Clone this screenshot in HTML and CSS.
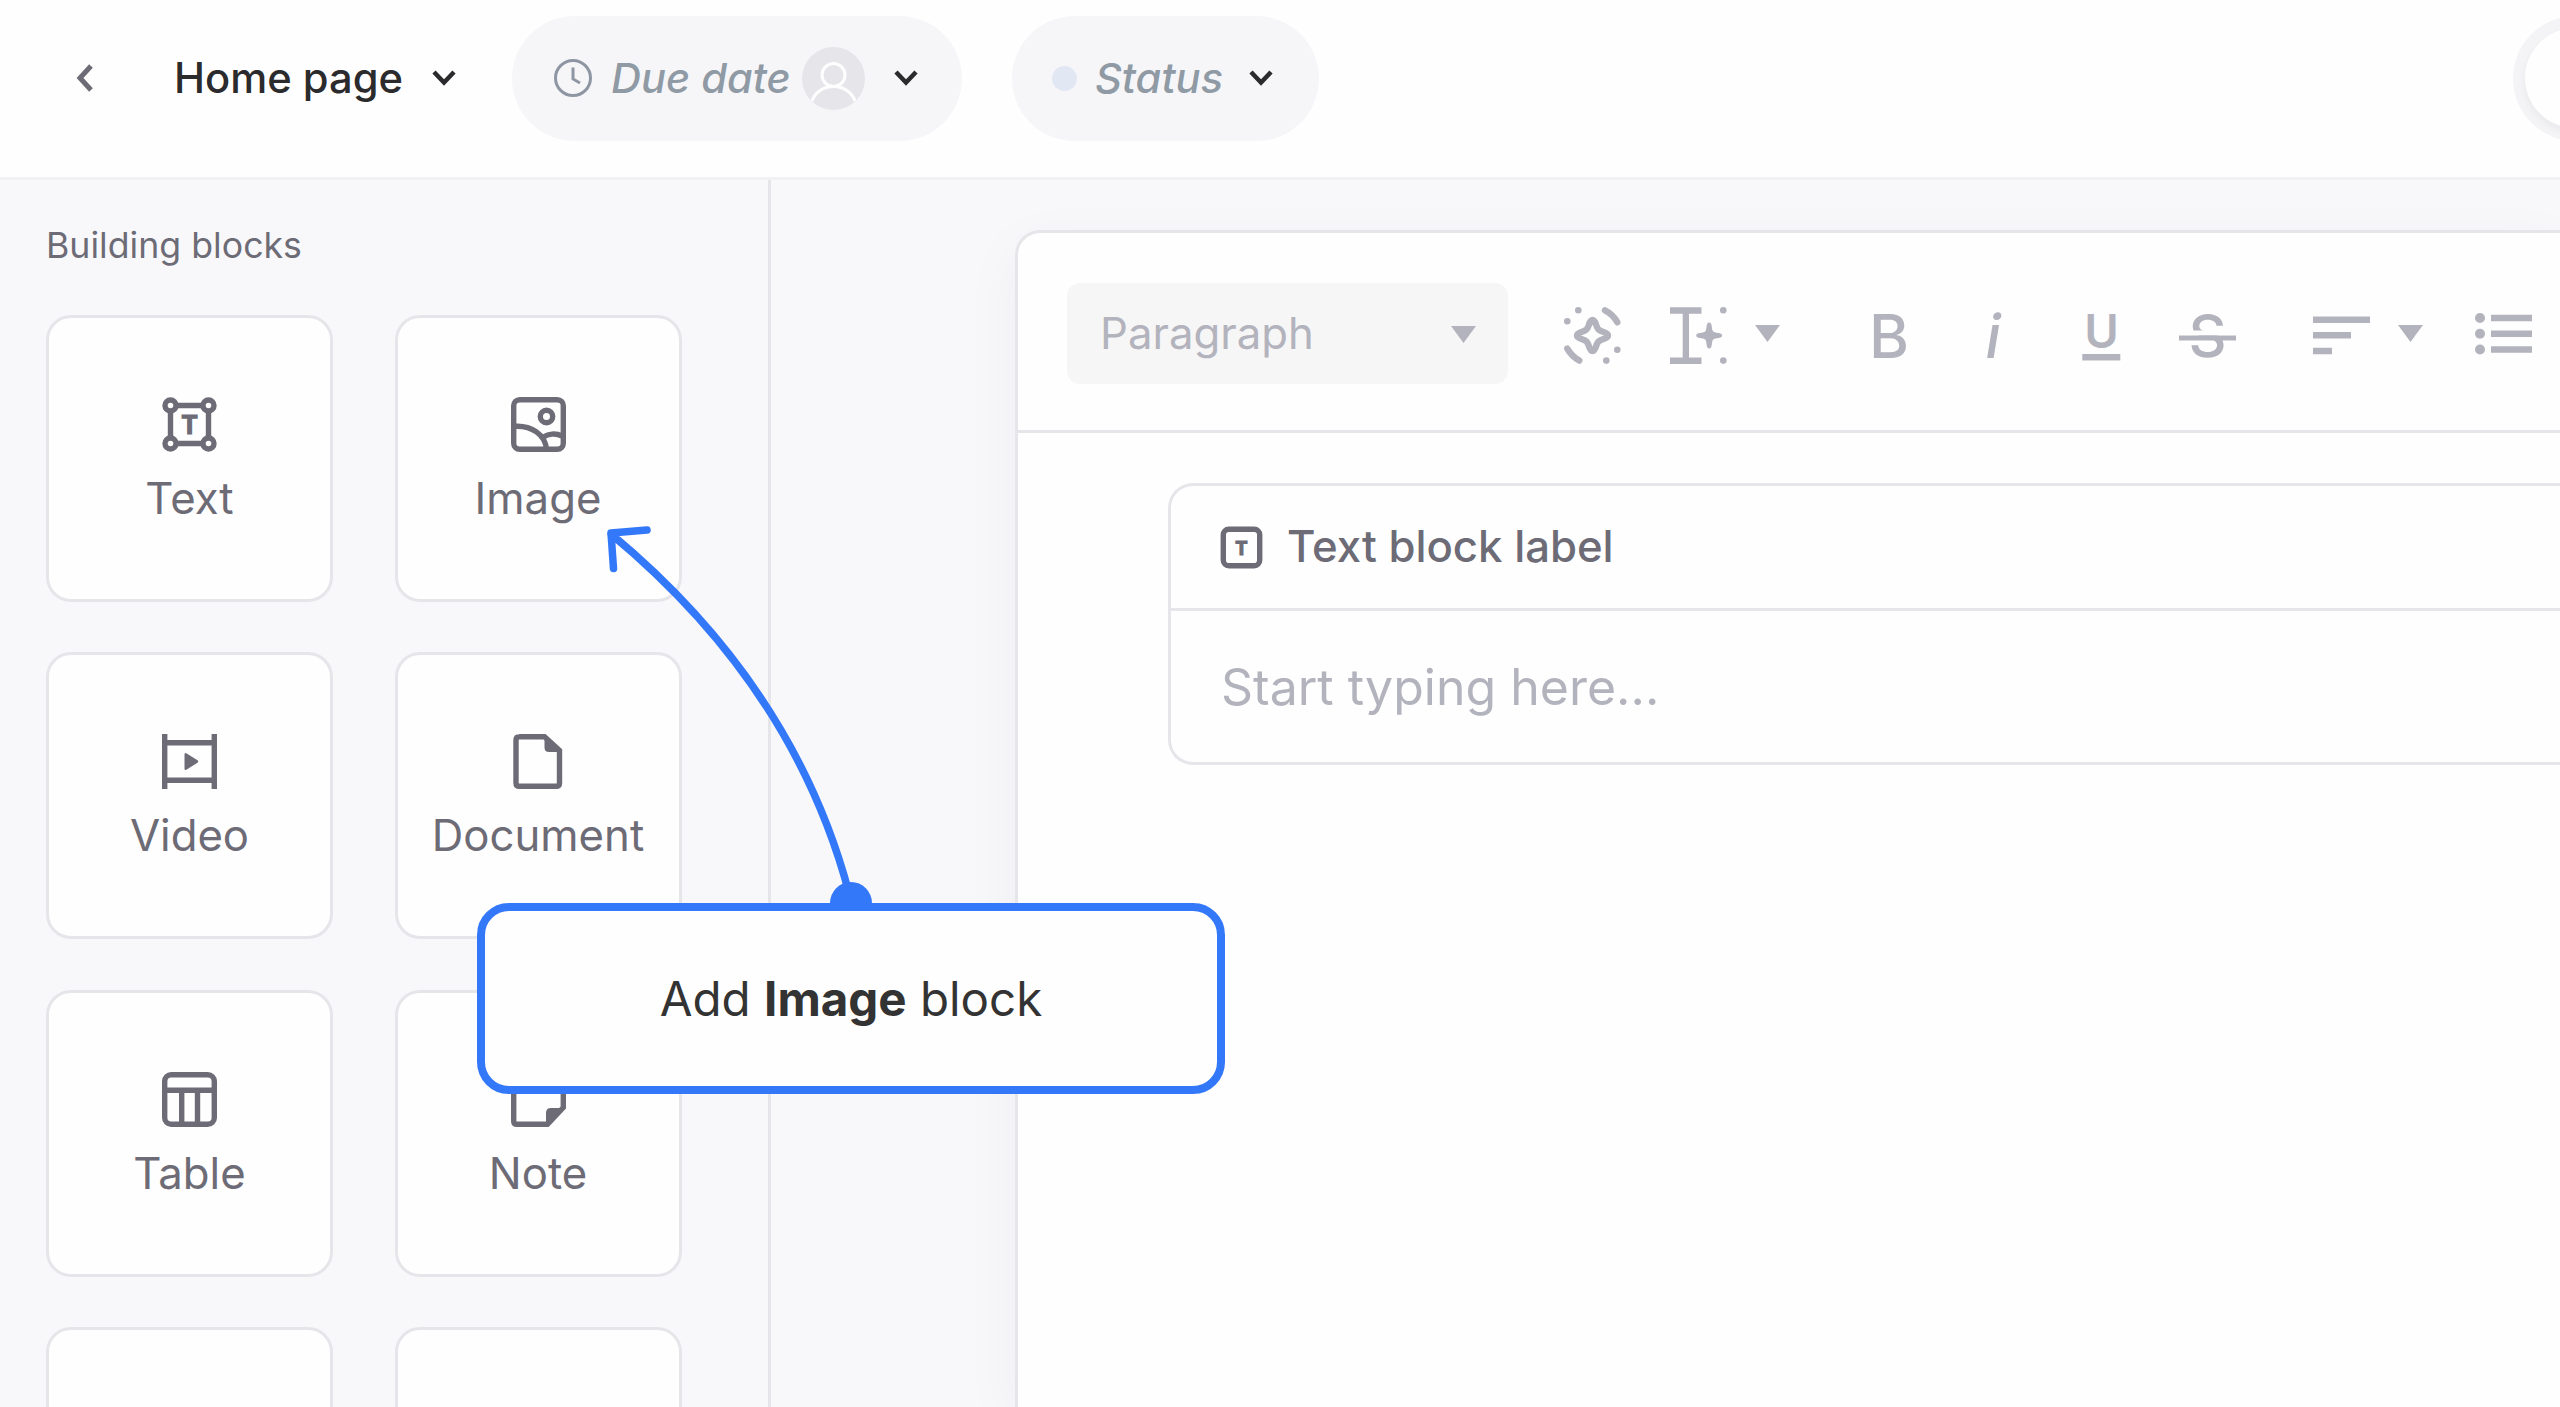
FILE: index.html
```html
<!DOCTYPE html>
<html lang="en">
<head>
    <meta charset="UTF-8">
    <meta name="viewport" content="width=device-width, initial-scale=1.0">
    <title>Home page</title>
    <link rel="stylesheet" href="styles.css">
</head>
<body>
    <header class="header">
        <svg class="back" width="18" height="30" viewBox="0 0 18 30"><path d="M15 3 4 15l11 12"/></svg>
        <div class="page-name">Home page</div>
        <svg class="chevron" width="24" height="16" viewBox="0 0 24 16"><path d="M2 2l10 10.500L22 2"/></svg>

        <div class="pill due">
            <svg class="clock" width="38" height="38" viewBox="0 0 38 38"><circle cx="19" cy="19" r="17.500"/><path d="M19 8.500V20l7 4"/></svg>
            <span class="due-text">Due date</span>
            <svg class="avatar" width="63" height="63" viewBox="0 0 63 63">
                <circle class="avatar-bg" cx="31.500" cy="31.500" r="31.500"/>
                <circle cx="31.500" cy="28" r="11.500"/>
                <path d="M10 54c3-9 12-14.500 21.500-14.500S50 45 53 54"/>
            </svg>
            <svg class="chevron" width="24" height="16" viewBox="0 0 24 16"><path d="M2 2l10 10.500L22 2"/></svg>
        </div>

        <div class="pill status">
            <span class="dot"></span>
            <span class="status-text">Status</span>
            <svg class="chevron" width="24" height="16" viewBox="0 0 24 16"><path d="M2 2l10 10.500L22 2"/></svg>
        </div>

        <div class="toggle"><div class="knob"></div></div>
    </header>

    <main class="main">
        <aside class="sidebar">
            <h2 class="sidebar-title">Building blocks</h2>
            <div class="blocks">
                <div class="block">
                    <svg class="icon" width="55" height="55" viewBox="0 0 55 55">
                        <path d="M14 8.500h27M14 46.500h27M8.500 14v27M46.500 14v27"/>
                        <circle cx="8.500" cy="8.500" r="5.500"/><circle cx="46.500" cy="8.500" r="5.500"/>
                        <circle cx="8.500" cy="46.500" r="5.500"/><circle cx="46.500" cy="46.500" r="5.500"/>
                        <text x="27.500" y="36.500" font-size="25">T</text>
                    </svg>
                    <span>Text</span>
                </div>
                <div class="block">
                    <svg class="icon" width="55" height="55" viewBox="0 0 55 55">
                        <rect x="2.700" y="2.700" width="49.600" height="49.600" rx="6"/>
                        <circle cx="35.500" cy="19.500" r="6.200"/>
                        <path d="M3 29.300C21 28 34 38 35.500 52M32 40.500c5-4 13-4.500 19-1.500"/>
                    </svg>
                    <span>Image</span>
                </div>
                <div class="block">
                    <svg class="icon" width="55" height="55" viewBox="0 0 55 55">
                        <path d="M2.700 0v55M52.300 0v55M3 8.800h49M3 46.200h49"/>
                        <path class="solid" d="M22.500 20.500q0-2.500 2.200-1.100l10.800 6.900q1.400 1.200 0 2.400l-10.800 6.900q-2.200 1.400-2.200-1.100z"/>
                    </svg>
                    <span>Video</span>
                </div>
                <div class="block">
                    <svg class="icon" width="55" height="55" viewBox="0 0 55 55">
                        <path d="M8 2.700h25.500L48.500 16.500V49q0 3.300-3.300 3.300H8.300Q5 52.300 5 49V6q0-3.300 3.300-3.300z"/>
                        <path class="solid" d="M33.500 2v11.500q0 4.500 4.500 4.500h11z"/>
                    </svg>
                    <span>Document</span>
                </div>
                <div class="block">
                    <svg class="icon" width="55" height="55" viewBox="0 0 55 55">
                        <rect x="2.700" y="2.700" width="49.600" height="49.600" rx="6.500"/>
                        <path d="M3 18.200h49M19.700 18v34M35.500 18v34"/>
                    </svg>
                    <span>Table</span>
                </div>
                <div class="block">
                    <svg class="icon" width="55" height="55" viewBox="0 0 55 55">
                        <path d="M6 2.700h43q3.300 0 3.300 3.300v29.500L36.500 52.300H6q-3.300 0-3.300-3.300V6q0-3.300 3.300-3.300z"/>
                        <path class="solid" d="M35 53V41q0-5 5-5h13z"/>
                    </svg>
                    <span>Note</span>
                </div>
                <div class="block"></div>
                <div class="block"></div>
            </div>
        </aside>

        <section class="canvas">
            <div class="editor">
                <div class="toolbar">
                    <div class="select">
                        <span>Paragraph</span>
                        <svg class="caret" width="25" height="17" viewBox="0 0 25 17"><path d="M0 0h25L12.500 17z"/></svg>
                    </div>
                    <svg class="tool ai" width="57" height="57" viewBox="0 0 57 57">
                        <g class="line">
                            <path d="M41 3.300q8 4 12.300 12M3.300 41.600q4.300 7.500 12 12"/>
                            <path d="M28.500 13c3.500 0 3 6.500 6 9.500s9.500 2.500 9.500 6-6.500 3-9.500 6-2.500 9.500-6 9.500-3-6.500-6-9.500-9.500-2.500-9.500-6 6.500-3 9.500-6 2.500-9.500 6-9.500z"/>
                        </g>
                        <circle cx="14.300" cy="3.300" r="3.300"/><circle cx="3.300" cy="14.300" r="3.300"/>
                        <circle cx="53.300" cy="42.700" r="3.300"/><circle cx="42.300" cy="53.600" r="3.300"/>
                    </svg>
                    <svg class="tool ai-text" width="57" height="57" viewBox="0 0 57 57">
                        <path d="M0 .3h31.500v6.400H19v43.800h12.500v6.400H0v-6.400h12.700V6.700H0z"/>
                        <path d="M39.200 15.500c3.500 0 2 7 4 9s9 .5 9 4-7 2-9 4-.5 9-4 9-2-7-4-9-9-.5-9-4 7-2 9-4 .5-9 4-9z"/>
                        <circle cx="53.300" cy="3.300" r="3.300"/><circle cx="53.300" cy="53.600" r="3.300"/>
                    </svg>
                    <svg class="caret small-gap" width="25" height="17" viewBox="0 0 25 17"><path d="M0 0h25L12.500 17z"/></svg>
                    <svg class="tool bold" width="57" height="57" viewBox="0 0 57 57"><text x="28" y="50.500" font-size="61">B</text></svg>
                    <svg class="tool italic" width="57" height="57" viewBox="0 0 57 57"><text x="27" y="50.500" font-size="60">i</text></svg>
                    <svg class="tool underline" width="57" height="57" viewBox="0 0 57 57"><text x="28.500" y="40.500" font-size="47">U</text><path d="M9.300 47h38v6.500h-38z"/></svg>
                    <svg class="tool strike" width="57" height="57" viewBox="0 0 57 57"><text x="28.500" y="50.300" font-size="59">S</text><path class="gap" d="M0 23.500h57v5H0z"/><path d="M0 28.500h57v5H0z"/></svg>
                    <svg class="tool align" width="57" height="57" viewBox="0 0 57 57"><path d="M0 9.500h57V16H0zM0 25h38v6.500H0zM0 40.800h19v6.500H0z"/></svg>
                    <svg class="caret small-gap" width="25" height="17" viewBox="0 0 25 17"><path d="M0 0h25L12.500 17z"/></svg>
                    <svg class="tool list" width="57" height="57" viewBox="0 0 57 57">
                        <circle cx="5" cy="11" r="5"/><circle cx="5" cy="26.700" r="5"/><circle cx="5" cy="42.500" r="5"/>
                        <path d="M16 7.800h41v6.400H16zM16 23.500h41v6.400H16zM16 39.300h41v6.400H16z"/>
                    </svg>
                </div>

                <div class="text-block">
                    <div class="text-block-head">
                        <svg class="icon" width="41" height="41" viewBox="0 0 41 41">
                            <rect x="2.300" y="2.300" width="36.400" height="36.400" rx="5.500"/>
                            <text x="20.500" y="27.500" font-size="18.500">T</text>
                        </svg>
                        <span>Text block label</span>
                    </div>
                    <div class="text-block-body">Start typing here...</div>
                </div>
            </div>
        </section>
    </main>

    <!-- callout pointing at the Image block -->
    <svg class="arrow" width="2560" height="1407" viewBox="0 0 2560 1407">
        <path d="M611 534Q794 686 849 893M647 530L611 533L613.500 568.500"/>
        <circle cx="851" cy="903" r="21"/>
    </svg>
    <div class="callout"><p>Add <b>Image</b> block</p></div>
</body>
</html>
```
FILE: styles.css
```css
* {
    margin: 0;
    padding: 0;
    box-sizing: border-box;
}

body {
    width: 2560px;
    height: 1407px;
    display: flex;
    flex-direction: column;
    position: relative;
    overflow: hidden;
    background-color: #f8f8fb;
    color: #6c6b76;
    font-family: Inter, "Liberation Sans", sans-serif;
    font-size: 43.7px;
    line-height: 44px;
}

svg {
    display: block;
    flex: none;
    overflow: visible;
}

span,
.page-name {
    white-space: nowrap;
}

/* Header */
.header {
    height: 180px;
    flex: none;
    display: flex;
    align-items: center;
    padding: 15px 0 36px 76px;
    position: relative;
    z-index: 1;
    overflow: hidden;
    background-color: #fefefe;
    border-bottom: 3px solid #f1f1f4;
}

.back {
    fill: none;
    stroke: #6c6b76;
    stroke-width: 5;
}

.page-name {
    width: 229px;
    margin-left: 80px;
    color: #2b2b2d;
    font-size: 41.7px;
    font-weight: 500;
}

.chevron {
    fill: none;
    stroke: #2b2b2d;
    stroke-width: 4.5;
}

.page-name + .chevron {
    margin-left: 29px;
}

.pill {
    height: 125px;
    flex: none;
    display: flex;
    align-items: center;
    border-radius: 63px;
    background-color: #f6f6f9;
    color: #8f9aa5;
    font-size: 41.6px;
    font-style: italic;
    font-weight: 500;
}

.due {
    width: 450px;
    margin-left: 56px;
    padding-left: 42px;
}

.clock {
    fill: none;
    stroke: #8f96a3;
    stroke-width: 3;
}

.due-text {
    width: 182px;
    margin-left: 19px;
}

.avatar {
    margin: 0 29px 0 9px;
    fill: none;
    stroke: #fefefe;
    stroke-width: 3;
}

.avatar-bg {
    fill: #e5e5ea;
    stroke: none;
}

.status {
    width: 307px;
    margin-left: 50px;
    padding-left: 40px;
}

.dot {
    width: 25px;
    height: 25px;
    border-radius: 50%;
    background-color: #e1e7f3;
}

.status-text {
    width: 128px;
    margin: 0 26px 0 18px;
}

.toggle {
    width: 200px;
    height: 125px;
    flex: none;
    margin-left: 1194px;
    padding: 12px;
    border-radius: 63px;
    background-color: #f4f4f6;
}

.knob {
    width: 100px;
    height: 100px;
    border-radius: 50%;
    background-color: #fefefe;
    box-shadow: 0 4px 9px rgba(0, 0, 0, 0.05);
}

/* Sidebar */
.main {
    flex: 1;
    display: flex;
    min-height: 0;
    overflow: hidden;
}

.sidebar {
    width: 771px;
    flex: none;
    padding: 47px 0 0 46px;
    border-right: 3px solid #e6e6ea;
    overflow: hidden;
}

.sidebar-title {
    font-size: 35.7px;
    font-weight: 400;
    line-height: 37px;
}

.blocks {
    display: grid;
    grid-template-columns: 287px 287px;
    grid-auto-rows: 287px;
    gap: 50.6px 61.5px;
    margin-top: 50.5px;
}

.block {
    display: flex;
    flex-direction: column;
    align-items: center;
    gap: 25px;
    padding-top: 79px;
    border: 3px solid #e6e6ea;
    border-radius: 25px;
    background-color: #fefefe;
}

.icon {
    fill: none;
    stroke: #6c6b76;
    stroke-width: 5.4;
}

.icon text,
.icon .solid {
    fill: #6c6b76;
    stroke: none;
}

.icon text {
    font-weight: 700;
    text-anchor: middle;
    stroke: #6c6b76;
    stroke-width: 1.2;
}

/* Editor */
.canvas {
    flex: 1;
    display: flex;
    min-width: 0;
    padding: 50px 0 0 244px;
}

.editor {
    flex: 1;
    min-width: 0;
    border: 3px solid #e6e6ea;
    border-width: 3px 0 0 3px;
    border-radius: 25px 0 0 0;
    background-color: #fefefe;
    box-shadow: 0 16px 60px rgba(0, 0, 0, 0.045);
}

.toolbar {
    height: 200px;
    display: flex;
    align-items: center;
    padding-left: 49px;
    border-bottom: 3px solid #e6e6ea;
    color: #b3b3be;
}

.select {
    width: 441px;
    height: 101px;
    flex: none;
    display: flex;
    align-items: center;
    justify-content: space-between;
    margin-top: 3px;
    padding: 2px 32px 0 33px;
    border-radius: 13px;
    background-color: #f6f6f6;
}

.caret,
.tool {
    fill: #b3b3be;
}

.small-gap {
    margin-top: 3px;
    margin-left: 28px;
}

.tool {
    margin-top: 7px;
}

.tool text {
    font-weight: 500;
    text-anchor: middle;
}

.ai {
    margin-left: 56px;
}

.ai .line {
    fill: none;
    stroke: #b3b3be;
    stroke-width: 6.4;
    stroke-linecap: round;
}

.ai-text {
    margin-left: 49px;
}

.bold {
    margin-left: 81px;
}

.italic {
    margin-left: 48px;
    font-style: italic;
}

.underline {
    margin-left: 50px;
}

.tool.underline text {
    font-weight: 600;
}

.strike {
    margin-left: 49px;
}

.gap {
    fill: #fefefe;
}

.align {
    margin-left: 77px;
}

.list {
    margin-left: 52px;
}

.text-block {
    height: 282px;
    margin: 50px 0 0 150px;
    border: 3px solid #e6e6ea;
    border-right: none;
    border-radius: 25px 0 0 25px;
}

.text-block-head {
    height: 125px;
    display: flex;
    align-items: center;
    gap: 25px;
    padding-left: 50px;
    border-bottom: 3px solid #e6e6ea;
    font-weight: 500;
}

.text-block-body {
    padding: 50px 0 0 50px;
    color: #b3b3be;
    font-size: 50px;
    line-height: 52px;
}

/* Callout */
.arrow {
    position: absolute;
    top: 0;
    left: 0;
    z-index: 2;
    fill: #3478fa;
}

.arrow path {
    fill: none;
    stroke: #3478fa;
    stroke-width: 7.5;
    stroke-linecap: round;
    stroke-linejoin: round;
}

.callout {
    position: absolute;
    top: 903px;
    left: 477px;
    z-index: 3;
    width: 748px;
    height: 191px;
    display: flex;
    align-items: center;
    justify-content: center;
    padding-top: 1px;
    border: 8px solid #3478fa;
    border-radius: 32px;
    background-color: #fefefe;
    color: #333;
    font-size: 47.5px;
}
```
